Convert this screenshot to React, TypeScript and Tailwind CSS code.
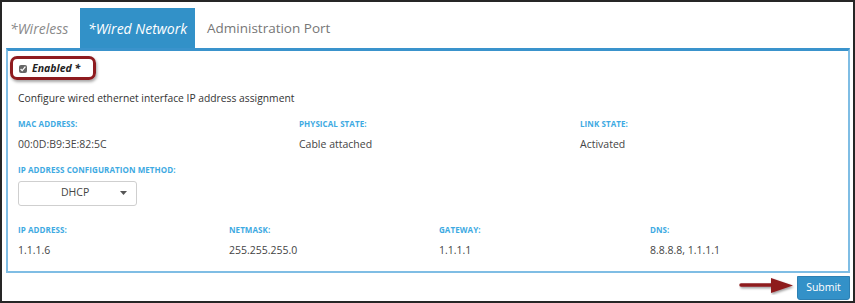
import React from "react";

const Label = ({ children }: { children: React.ReactNode }) => (
  <div className="text-[8px] font-bold uppercase leading-none text-[#3eaae2] tracking-[0.01em]">{children}</div>
);

const Value = ({ children }: { children: React.ReactNode }) => (
  <div className="mt-[11px] text-[10.5px] leading-none text-[#444]">{children}</div>
);

export default function App() {
  return (
    <div
      className="relative w-[855px] h-[303px] border-2 border-[#262626] bg-white overflow-hidden"
      style={{ fontFamily: '"Open Sans", "Noto Sans", sans-serif' }}
    >
      {/* tabs */}
      <div className="flex items-stretch h-[46px] pt-[6px] pl-[4px]">
        <div className="flex items-center w-[74px] pl-[4px] text-[14px] italic text-[#8a8a8a]">*Wireless</div>
        <div className="flex items-center justify-center w-[115px] bg-[#3291c8] text-[14px] italic text-white">*Wired Network</div>
        <div className="ml-[12px] flex items-center text-[13.5px] text-[#777]">Administration Port</div>
      </div>

      {/* panel */}
      <div className="relative ml-[4px] mr-[3px] h-[225px] border-2 border-t-[3px] border-[#7fbde4] border-t-[#3a93cc] px-[10px] pt-[12px]">
        <div className="flex items-center gap-[5px] h-[12px] pl-[1px]">
          <input type="checkbox" defaultChecked className="w-[8px] h-[8px] m-0 accent-[#666]" />
          <span className="text-[10.5px] font-bold italic text-[#222]">Enabled *</span>
        </div>
        <div className="absolute left-[2px] top-[5px] w-[86px] h-[24px] rounded-[7px] border-[3px] border-[#8e1b1f] shadow-[1px_2px_3px_rgba(0,0,0,0.35)]" />

        <div className="mt-[18px] text-[10.3px] leading-none text-[#333]">
          Configure wired ethernet interface IP address assignment
        </div>

        <div className="mt-[17px] grid grid-cols-[281px_281px_1fr]">
          <div>
            <Label>MAC Address:</Label>
            <Value>00:0D:B9:3E:82:5C</Value>
          </div>
          <div>
            <Label>Physical State:</Label>
            <Value>Cable attached</Value>
          </div>
          <div>
            <Label>Link State:</Label>
            <Value>Activated</Value>
          </div>
        </div>

        <div className="mt-[16px]">
          <Label>IP Address Configuration Method:</Label>
          <div className="mt-[7px] relative flex items-center w-[119px] h-[25px] rounded-[3px] border border-[#cfcfcf] bg-white">
            <span className="absolute left-[42px] text-[10.5px] text-[#444]">DHCP</span>
            <svg className="absolute right-[9px]" width="7" height="4" viewBox="0 0 7 4">
              <path d="M0 0H7L3.5 4Z" fill="#555" />
            </svg>
          </div>
        </div>

        <div className="mt-[20px] grid grid-cols-[211px_210px_211px_1fr]">
          <div>
            <Label>IP Address:</Label>
            <Value>1.1.1.6</Value>
          </div>
          <div>
            <Label>Netmask:</Label>
            <Value>255.255.255.0</Value>
          </div>
          <div>
            <Label>Gateway:</Label>
            <Value>1.1.1.1</Value>
          </div>
          <div>
            <Label>DNS:</Label>
            <Value>8.8.8.8, 1.1.1.1</Value>
          </div>
        </div>
      </div>

      {/* submit */}
      <div className="flex justify-end mr-[3px]">
        <div className="relative">
          <svg className="absolute left-[-58px] top-[4px]" width="58" height="18" viewBox="0 0 58 18">
            <defs>
              <filter id="sh" x="-10%" y="-30%" width="130%" height="170%">
                <feDropShadow dx="1" dy="1.5" stdDeviation="1" floodColor="#000" floodOpacity="0.4" />
              </filter>
            </defs>
            <g filter="url(#sh)">
              <path d="M2 8H36" stroke="#8e1b1f" strokeWidth="3.5" strokeLinecap="round" />
              <path d="M32 1L54 8.5L32 16Z" fill="#8e1b1f" />
            </g>
          </svg>
          <button className="w-[53px] h-[24px] rounded-b-[3px] bg-[#3391c8] text-[10.5px] text-white border border-[#2d80b3]">
            Submit
          </button>
        </div>
      </div>
    </div>
  );
}
